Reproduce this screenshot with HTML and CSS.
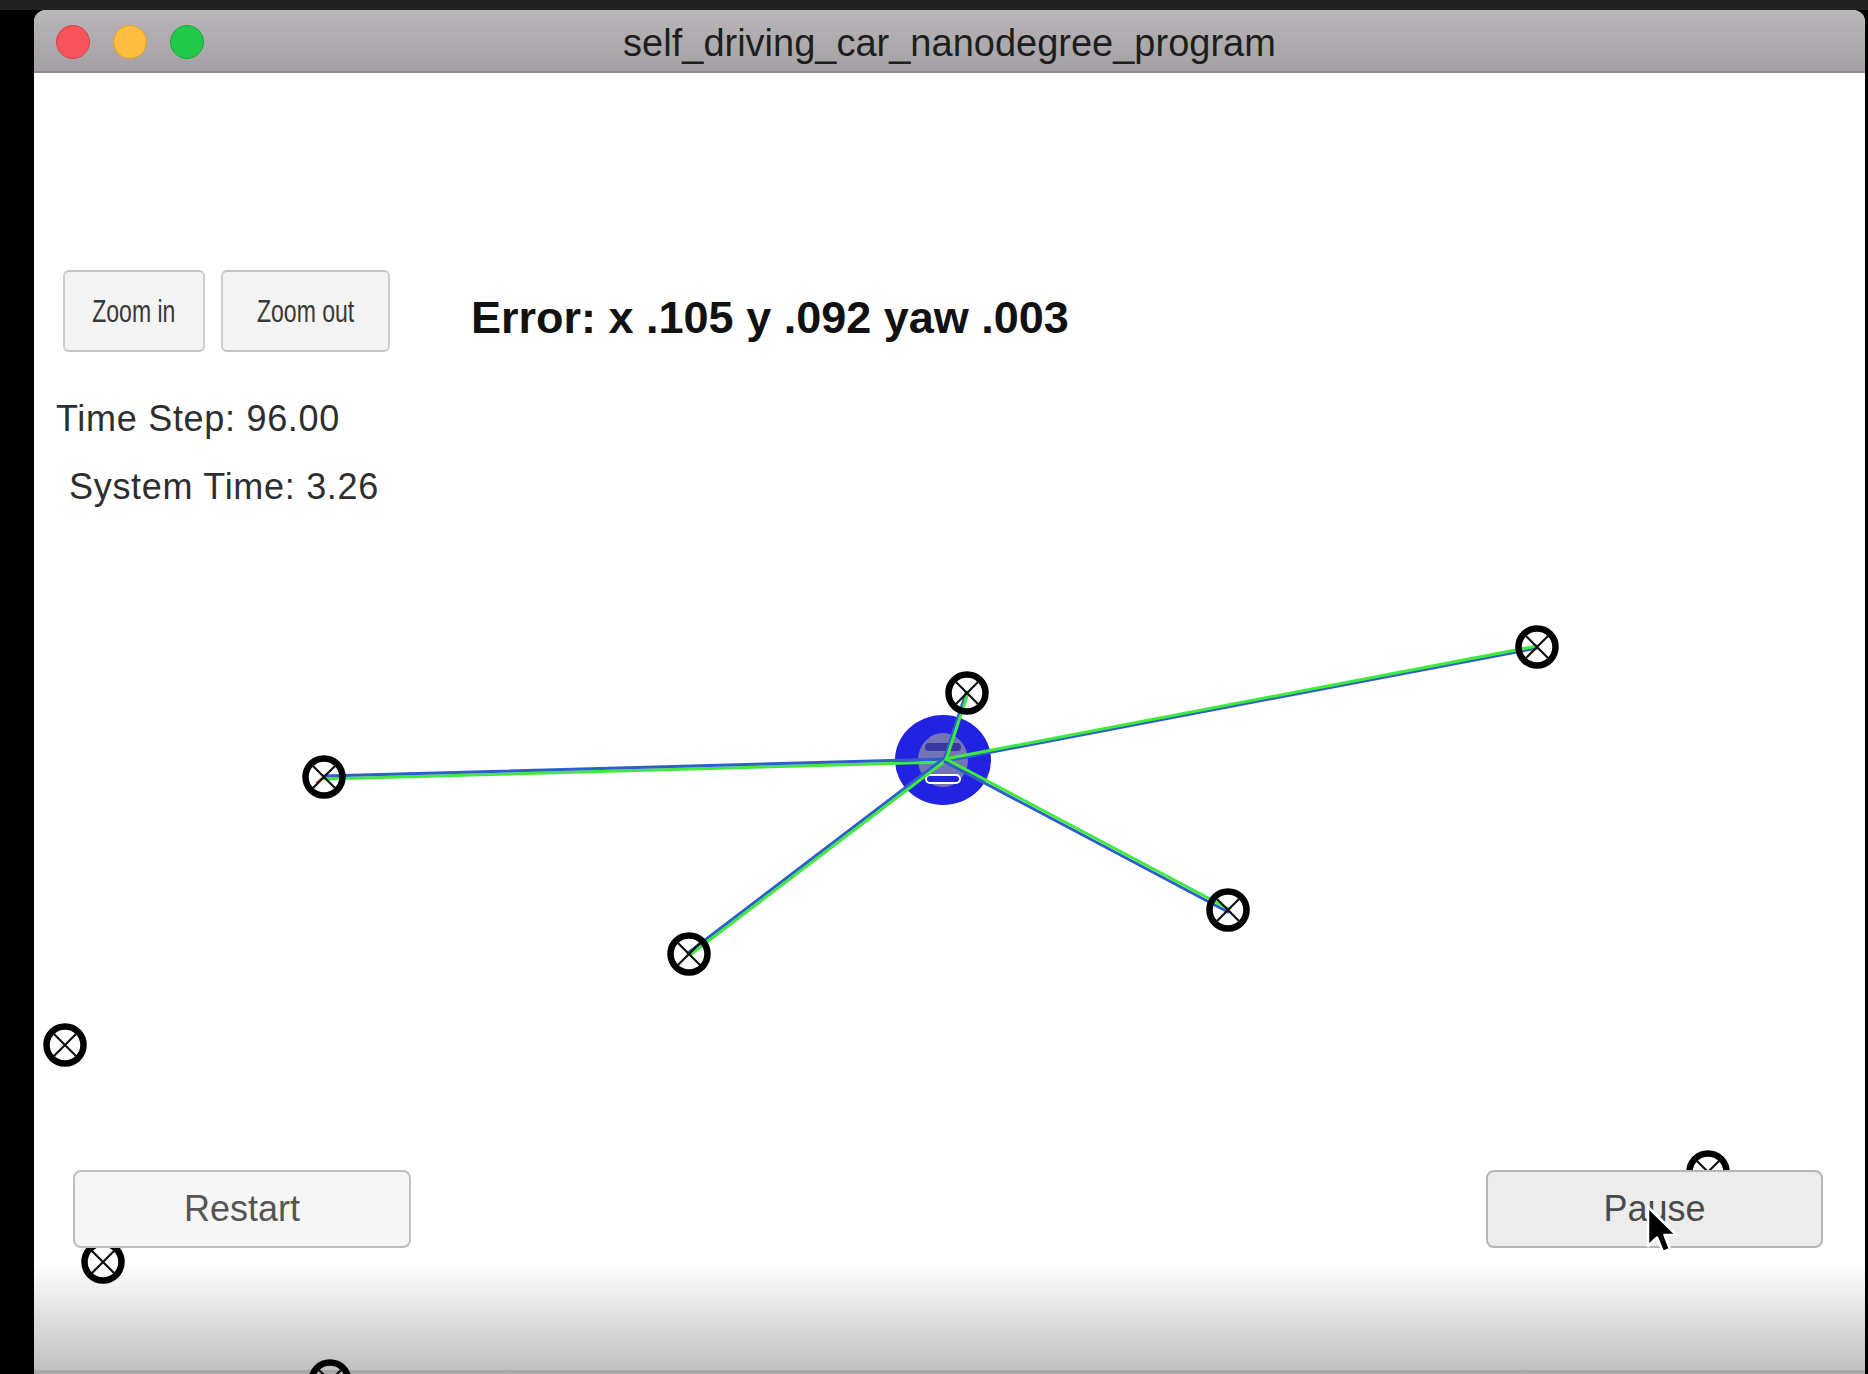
FILE: index.html
```html
<!DOCTYPE html>
<html>
<head>
<meta charset="utf-8">
<title>self_driving_car_nanodegree_program</title>
<link rel="stylesheet" href="styles.css">
</head>
<body>
<div class="screen">
  <div class="window">
    <header class="titlebar">
      <div class="lights">
        <span class="light red"></span>
        <span class="light yellow"></span>
        <span class="light green"></span>
      </div>
      <div class="title">self_driving_car_nanodegree_program</div>
      <div></div>
    </header>
    <main class="content">
      <svg class="canvas" width="1831" height="1301" viewBox="0 0 1831 1301">
        <defs>
          <g id="lm">
            <circle r="18.5" fill="none" stroke="#000" stroke-width="6.5"/>
            <path d="M-11 -11L11 11M11 -11L-11 11" stroke="#111" stroke-width="2.2"/>
          </g>
        </defs>
        <g transform="translate(-34,-73)">
          <!-- vehicle -->
          <ellipse cx="943" cy="760" rx="48" ry="45" fill="#2222e2"/>
          <ellipse cx="943" cy="760" rx="25" ry="27" fill="#7475b6"/>
          <rect x="925" y="743" width="36" height="8" rx="4" fill="#3838a0"/>
          <rect x="926" y="775" width="34" height="8" rx="4" fill="#2222e2" stroke="#fff" stroke-width="2"/>
          <!-- observation lines -->
          <g stroke-width="3" stroke-linecap="round">
            <line x1="945" y1="762" x2="324" y2="779" stroke="#3fea3f"/>
            <line x1="945" y1="759" x2="324" y2="776" stroke="#2d5fc9"/>
            <line x1="945" y1="761" x2="1537" y2="648" stroke="#2d5fc9"/>
            <line x1="945" y1="759" x2="1537" y2="646" stroke="#3fea3f"/>
            <line x1="944" y1="760" x2="966" y2="693" stroke="#2d5fc9"/>
            <line x1="946" y1="760" x2="968" y2="693" stroke="#3fea3f"/>
            <line x1="943" y1="759" x2="688" y2="953" stroke="#2d5fc9"/>
            <line x1="945" y1="761" x2="690" y2="955" stroke="#3fea3f"/>
            <line x1="945" y1="762" x2="1228" y2="912" stroke="#2d5fc9"/>
            <line x1="946" y1="759" x2="1229" y2="909" stroke="#3fea3f"/>
          </g>
          <!-- predicted markers -->
          <g stroke="#e33" stroke-width="1.5">
            <path d="M316 783L330 771"/>
            <path d="M682 961L696 947"/>
            <path d="M1222 916L1234 904"/>
            <path d="M1531 653L1543 641"/>
          </g>
          <!-- landmarks -->
          <use href="#lm" x="324" y="777"/>
          <use href="#lm" x="967" y="693"/>
          <use href="#lm" x="1537" y="647"/>
          <use href="#lm" x="689" y="954"/>
          <use href="#lm" x="1228" y="910"/>
          <use href="#lm" x="65" y="1045"/>
          <use href="#lm" x="103" y="1262"/>
          <use href="#lm" x="1708" y="1172"/>
          <use href="#lm" x="330" y="1381"/>
        </g>
      </svg>

      <div class="toolbar">
        <button class="zbtn zin"><span>Zoom in</span></button>
        <button class="zbtn zout"><span>Zoom out</span></button>
        <div class="error">Error: x .105 y .092 yaw .003</div>
      </div>
      <div class="stat step">Time Step: 96.00</div>
      <div class="stat systime">System Time: 3.26</div>

      <div class="actions">
        <button class="act">Restart</button>
        <button class="act pause">Pause</button>
      </div>

      <svg class="cursor" width="36" height="52" viewBox="0 0 36 52">
        <path d="M2 2L2 41L11 32.5L17 47L24 44L18.5 30L30.5 30Z" fill="#000" stroke="#fff" stroke-width="2.5" stroke-linejoin="round"/>
      </svg>
    </main>
  </div>
</div>
</body>
</html>
```

FILE: styles.css
```css
* {
  box-sizing: border-box;
}

html,
body {
  margin: 0;
  padding: 0;
}

body {
  width: 1868px;
  height: 1374px;
  overflow: hidden;
  background: #000;
  font-family: "Liberation Sans", Arial, sans-serif;
}

.screen {
  height: 1374px;
  padding: 10px 3px 0 34px;
  background: linear-gradient(#212121 0, #212121 10px, #000 10px);
}

.window {
  height: 1364px;
  border-radius: 12px 12px 0 0;
  overflow: hidden;
  background: #fff;
  display: flex;
  flex-direction: column;
}

.titlebar {
  flex: none;
  height: 63px;
  display: grid;
  grid-template-columns: 1fr auto 1fr;
  align-items: center;
  background: linear-gradient(#b9b6b9, #a3a1a3);
  border-bottom: 2px solid #8e8c8e;
}

.lights {
  display: flex;
  gap: 23px;
  padding-left: 22px;
  margin-top: 3px;
}

.light {
  width: 34px;
  height: 34px;
  border-radius: 50%;
}

.red {
  background: #f6535a;
  border: 1px solid #d8444b;
}

.yellow {
  background: #fdbd3e;
  border: 1px solid #e0a12f;
}

.green {
  background: #22c84a;
  border: 1px solid #1aa93c;
}

.title {
  font-size: 38px;
  line-height: 38px;
  padding-top: 4px;
  color: #1e1e1e;
  white-space: nowrap;
}

.content {
  position: relative;
  flex: 1;
  display: flex;
  flex-direction: column;
  background: linear-gradient(#fff 0, #fff 1190px, #c0c0c0 1297px, #a8a8a8 1297px);
}

.canvas {
  position: absolute;
  left: 0;
  top: 0;
}

.toolbar {
  position: relative;
  display: flex;
  align-items: flex-start;
  gap: 16px;
  padding: 197px 0 0 29px;
}

.zbtn {
  height: 82px;
  padding: 0;
  display: flex;
  align-items: center;
  justify-content: center;
  background: #f4f4f4;
  border: 2px solid #cdcdcd;
  border-top-color: #c3c3c3;
  border-bottom-color: #c3c3c3;
  border-radius: 6px;
  font-family: inherit;
}

.zin {
  width: 142px;
}

.zout {
  width: 169px;
}

.zbtn span {
  display: inline-block;
  font-size: 32px;
  line-height: 32px;
  color: #383838;
  transform: scaleX(0.72);
}

.error {
  margin: 25px 0 0 65px;
  font-size: 45px;
  line-height: 45px;
  font-weight: 700;
  color: #111;
  white-space: nowrap;
}

.stat {
  position: relative;
  font-size: 36px;
  line-height: 36px;
  letter-spacing: 0.7px;
  color: #2e2e2e;
  white-space: nowrap;
}

.step {
  margin: 49px 0 0 22px;
}

.systime {
  margin: 32px 0 0 35px;
}

.actions {
  position: relative;
  margin-top: auto;
  display: flex;
  justify-content: space-between;
  padding: 0 42px 126px 39px;
}

.act {
  width: 338px;
  height: 78px;
  padding: 0;
  font-family: inherit;
  font-size: 36px;
  color: #555;
  background: #f6f6f6;
  border: 2px solid #bfbfbf;
  border-radius: 8px;
}

.pause {
  width: 337px;
  background: #ececec;
  color: #4a4a4a;
  border-color: #b5b5b5;
}

.cursor {
  position: absolute;
  left: 1612px;
  top: 1132px;
  z-index: 2;
}
```
